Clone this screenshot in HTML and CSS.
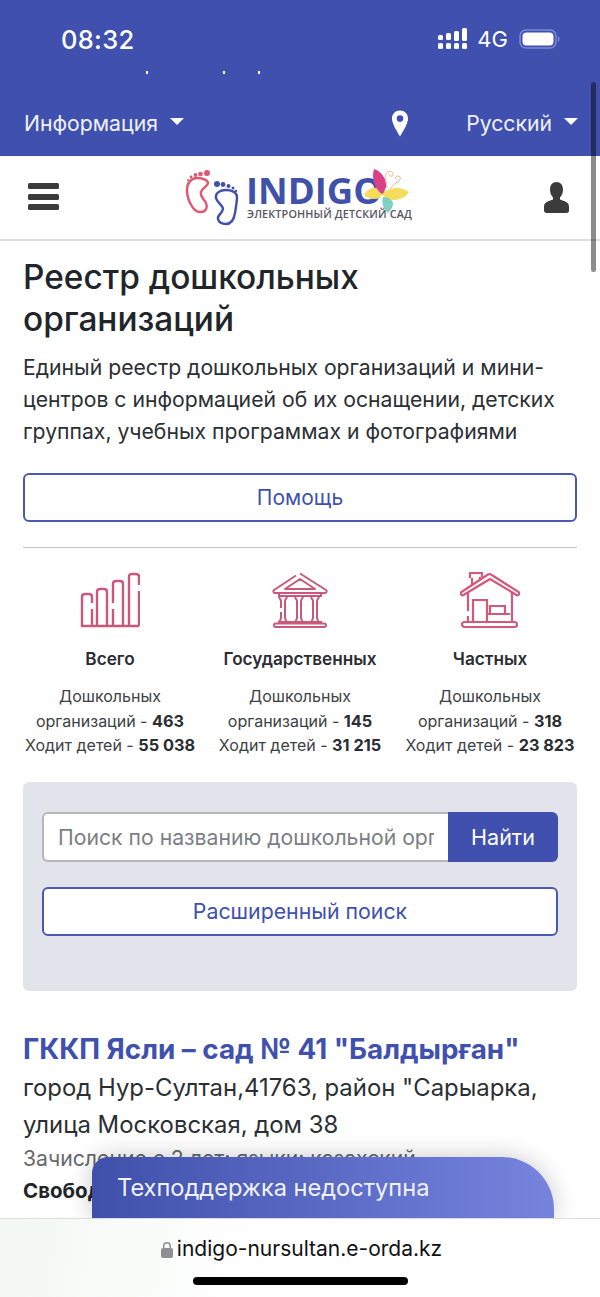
FILE: index.html
```html
<!DOCTYPE html>
<html>
<head>
	<meta charset="utf-8">
	<title>Реестр дошкольных организаций</title>
	<link rel="stylesheet" href="styles.css">
</head>
<body>
<div class="page">

	<div class="status">
		<span class="time">08:32</span>
		<div class="status-right">
			<svg class="signal" width="31" height="22" viewBox="0 0 31 22" fill="#fff">
				<rect x="0" y="7" width="5" height="5" rx="1.5"/><rect x="0" y="15" width="5" height="6" rx="1.5"/>
				<rect x="8" y="5" width="5" height="7" rx="1.5"/><rect x="8" y="15" width="5" height="6" rx="1.5"/>
				<rect x="16" y="3" width="5" height="10" rx="1.5"/><rect x="16" y="15" width="5" height="6" rx="1.5"/>
				<rect x="24" y="0" width="5" height="13" rx="1.5"/><rect x="24" y="15" width="5" height="6" rx="1.5"/>
			</svg>
			<span class="net">4G</span>
			<svg width="42" height="22" viewBox="0 0 42 22">
				<rect x="1" y="2" width="36" height="18" rx="6" fill="none" stroke="#7c89d6" stroke-width="1.5"/>
				<rect x="3.500" y="4.500" width="31" height="13" rx="4" fill="#fff"/>
				<path d="M39 8c2 .5 2 5.500 0 6z" fill="#7c89d6"/>
			</svg>
		</div>
	</div>
	<div class="specks"><i></i><i></i><i></i></div>

	<nav class="topnav">
		<span class="dropdown">Информация</span>
		<div class="topnav-right">
			<svg class="pin" width="16" height="27" viewBox="0 0 16 26">
				<path fill="#fff" fill-rule="evenodd" d="M8 0c4.500 0 8 3.500 8 8 0 5-4.500 12-8 18C4.500 20 0 13 0 8c0-4.500 3.500-8 8-8zm0 4.800a3.300 3.300 0 1 0 0 6.600 3.300 3.300 0 0 0 0-6.600z"/>
			</svg>
			<span class="dropdown">Русский</span>
		</div>
	</nav>

	<header class="header">
		<div class="burger"><i></i><i></i><i></i></div>
		<div class="logo">
			<svg class="feet" width="54" height="58" viewBox="0 0 54 58" fill="none">
				<path d="M12 9C6 9 2 14 2 21C2 30 8 44 16 43C21 43 23 38 21 34C19 30 15 28 16 23C17 19 23 17 23 14C23 11 17 9 12 9z" stroke="#e2566f" stroke-width="2.400"/>
				<g fill="#e2566f"><circle cx="22" cy="4" r="3"/><circle cx="15.500" cy="5" r="2.300"/><circle cx="10.500" cy="6" r="1.900"/><circle cx="6" cy="8" r="1.400"/><circle cx="3" cy="11" r="1.100"/></g>
				<path d="M41 21C35 21 30 24 31 29C32 34 38 36 38 40C37 45 32 46 33 50C34 54 38 55 41 55C46 55 49 50 50 44C51 38 52 32 52 28C52 23 46 21 41 21z" stroke="#3f51a8" stroke-width="2.400"/>
				<g fill="#3f51a8"><circle cx="32" cy="15" r="3"/><circle cx="38" cy="15.500" r="2.400"/><circle cx="43.500" cy="17" r="2"/><circle cx="48" cy="19" r="1.500"/><circle cx="51" cy="22" r="1.200"/></g>
			</svg>
			<div class="logo-text">
				<span class="logo-name">INDIGO</span>
				<span class="logo-sub">ЭЛЕКТРОННЫЙ ДЕТСКИЙ САД</span>
			</div>
			<svg class="flower" width="50" height="50" viewBox="0 0 50 50" fill="none">
				<path d="M3 29c3-6 10-9 18-6 1 4-1 7-2 9-6 2-12 1-16-3z" fill="#f6dc5c"/>
				<path d="M22 29C14 24 10 12 13 3c7 2 13 10 12 18z" fill="#d8408a"/>
				<path d="M21 28c6-6 18-9 27-2-4 6-10 8-15 8-5 0-9-2-12-6z" fill="#f6dc5c"/>
				<path d="M22 31c4 0 9 2 10 6 0 4-2 7-5 10-4-3-7-10-5-16z" fill="#7ed0c0"/>
				<path d="M26 22c0-5-3-9-1-14 2-4 7-3 7 0 0 3-4 3-4 0M29 23c3-4 5-6 8-7 3-2 3-6 0-6-3 0-3 3-1 4" stroke="#e8b37a" stroke-width=".9"/>
			</svg>
		</div>
		<svg class="user" width="25" height="31" viewBox="0 0 25 31" fill="#3b3b3b">
			<path d="M12.500 0c4 0 6.500 3 6.500 7.500 0 3-1 6-3 8v2c3 1.500 9 2 9 7v4c0 1.500-1 2.500-2.500 2.500h-20C1 31 0 30 0 28.500v-4c0-5 6-5.500 9-7v-2c-2-2-3-5-3-8C6 3 8.500 0 12.500 0z"/>
		</svg>
	</header>

	<main class="content">
		<h1 class="title">Реестр дошкольных организаций</h1>
		<p class="lead">Единый реестр дошкольных организаций и мини-центров с информацией об их оснащении, детских группах, учебных программах и фотографиями</p>
		<a class="btn-outline help">Помощь</a>
		<hr class="divider">

		<section class="stats">
			<div class="stat">
				<svg class="stat-icon" width="60" height="56" viewBox="0 0 60 56" fill="none" stroke="#c9597a" stroke-width="2.400">
					<path d="M2 54V25c0-2 1-3 3-3h4c2 0 3 1 3 3v6m0 6v17M17 54V20c0-2 1-3 3-3h4c2 0 3 1 3 3v34M33 54V37m0-6V12c0-2 1-3 3-3h4c2 0 3 1 3 3v42M49 54V5c0-2 1-3 3-3h4c2 0 3 1 3 3v8m0 6v35"/>
					<path d="M1 54h58"/>
				</svg>
				<div class="stat-name">Всего</div>
				<div class="stat-text">Дошкольных<br>организаций - <b>463</b><br>Ходит детей - <b>55 038</b></div>
			</div>
			<div class="stat">
				<svg class="stat-icon" width="56" height="56" viewBox="0 0 56 56" fill="none" stroke="#c9597a" stroke-width="2">
					<path d="M24 3.500L2 18c-1 1-1 3 1 3h50c2 0 2-2 1-3L28 1.500M28 7L13 17h30z" stroke-linejoin="round"/>
					<path d="M7 21v3h42v-3"/>
					<path d="M7 24c0 3 2 3 2 5v7m0 4v6l-2 5M15 24c0 3-2 3-2 5v17l2 5M23 24c0 3 2 3 2 5v17l-2 5M31 24c0 3-2 3-2 5v17l2 5M39 24c0 3 2 3 2 5v17l-2 5M47 24c0 3-2 3-2 5v17l2 5"/>
					<path d="M6 50h44"/>
					<rect x="2" y="51.500" width="52" height="3.500" rx="1.700"/>
				</svg>
				<div class="stat-name">Государственных</div>
				<div class="stat-text">Дошкольных<br>организаций - <b>145</b><br>Ходит детей - <b>31 215</b></div>
			</div>
			<div class="stat">
				<svg class="stat-icon" width="60" height="56" viewBox="0 0 60 56" fill="none" stroke="#d4587a" stroke-width="2.200">
					<path d="M1.500 20L28 2.500q1.500-1 3 0L58.500 20c2 1.500 0 4-2 3L30 7 3.500 23c-2 1-4-1.500-2-3z" stroke-linejoin="round"/>
					<path d="M10 6V1h12v4M12 6v7M20 5v3"/>
					<path d="M8 20v19m0 5v6M52 20v30"/>
					<path d="M13 50V28h14v22"/>
					<path d="M30 34h15v8H30zM28 42h22"/>
					<rect x="2" y="50" width="55" height="5" rx="2.500"/>
				</svg>
				<div class="stat-name">Частных</div>
				<div class="stat-text">Дошкольных<br>организаций - <b>318</b><br>Ходит детей - <b>23 823</b></div>
			</div>
		</section>

		<section class="search-panel">
			<div class="search-row">
				<input class="search-input" type="text" placeholder="Поиск по названию дошкольной организации">
				<button class="search-btn">Найти</button>
			</div>
			<a class="btn-outline advanced">Расширенный поиск</a>
		</section>

		<article class="result">
			<a class="result-title">ГККП Ясли – сад № 41 "Балдырған"</a>
			<div class="result-address">город Нур-Султан,41763, район "Сарыарка, улица Московская, дом 38</div>
			<div class="result-meta">Зачисление с 2 лет; языки: казахский</div>
			<div class="result-free">Свободных мест</div>
		</article>
	</main>

	<div class="scrollbar"></div>
	<div class="toast">Техподдержка недоступна</div>

	<div class="urlbar">
		<div class="url">
			<svg width="12" height="17" viewBox="0 0 12 17" fill="#8e8e93">
				<path d="M2 7V5a4 4 0 0 1 8 0v2h-1.500V5a2.500 2.500 0 0 0-5 0v2z"/>
				<rect x="0" y="7" width="12" height="10" rx="2"/>
			</svg>
			<span>indigo-nursultan.e-orda.kz</span>
		</div>
		<div class="home"></div>
	</div>
</div>
</body>
</html>
```

FILE: styles.css
```css
* { box-sizing: border-box; }

html, body { margin: 0; padding: 0; }

body {
	font-family: Inter, "Noto Sans", sans-serif;
	color: #212529;
	background: #fff;
}

.page {
	position: relative;
	width: 600px;
	height: 1297px;
	overflow: hidden;
	background: #fff;
}

/* status bar + top nav */
.status {
	height: 68px;
	padding: 10px 39px 0 61px;
	display: flex;
	justify-content: space-between;
	align-items: center;
	background: #4050ae;
	color: #fff;
}
.time { font-size: 25.500px; font-weight: 500; letter-spacing: .3px; }
.status-right { display: flex; align-items: center; gap: 8px; }
.net { font-size: 22px; margin-right: 3px; }

.specks {
	height: 10px;
	background: #4050ae;
	display: flex;
	padding-left: 146px;
}
.specks i { width: 2px; height: 3px; margin-top: 3px; background: #fff; margin-right: 75px; }
.specks i:nth-child(2) { margin-right: 33px; }

.topnav {
	height: 78px;
	padding: 12px 22px 0 24px;
	background: #4050ae;
	color: #f0f1fa;
	font-size: 21.200px;
	display: flex;
	justify-content: space-between;
	align-items: center;
}
.topnav-right { display: flex; align-items: center; gap: 58px; }
.dropdown { display: inline-flex; align-items: center; gap: 12px; }
.dropdown::after {
	content: "";
	border-left: 7px solid transparent;
	border-right: 7px solid transparent;
	border-top: 7px solid #fff;
	margin-top: -3px;
}

.header {
	height: 85px;
	padding: 0 31px 3px 28px;
	display: flex;
	justify-content: space-between;
	align-items: center;
	border-bottom: 2px solid #dedede;
	background: #fff;
}
.burger { width: 31px; display: flex; flex-direction: column; gap: 4.500px; margin-top: 1px; }
.burger i { height: 6px; border-radius: 1.500px; background: #3b3b3b; }
.user { margin-top: 3px; }

.logo { position: relative; display: flex; align-items: flex-start; width: 226px; height: 58px; margin-right: 7px; }
.feet { flex: none; margin-top: 1.500px; }
.logo-text { margin-left: 7px; display: flex; flex-direction: column; }
.logo-name {
	font-family: "Open Sans", sans-serif;
	font-size: 36.500px;
	font-weight: 700;
	line-height: 36px;
	margin-top: 5px;
	color: #3f51a8;
}
.logo-sub {
	font-family: "Open Sans", sans-serif;
	font-size: 10.800px;
	font-weight: 600;
	letter-spacing: .15px;
	line-height: 12px;
	margin-left: 1px;
	color: #55555f;
	white-space: nowrap;
}
.flower { position: absolute; left: 176px; top: -1px; }

/* main column */
.content { padding: 0 23px 0 23px; }

.title {
	margin: 15px 0 0;
	font-size: 33.400px;
	line-height: 42px;
	font-weight: 500;
	color: #212529;
}
.lead {
	margin: 11px 0 0;
	font-size: 21.200px;
	line-height: 32px;
	color: #2b2f33;
}

.btn-outline {
	display: block;
	height: 49px;
	line-height: 45px;
	text-align: center;
	font-size: 21px;
	color: #4050ae;
	background: #fff;
	border: 2px solid #4a59b3;
	border-radius: 6px;
}
.help { margin-top: 26px; }

.divider { margin: 25px 0 0; border: 0; border-top: 1px solid #c6c6c6; }

.stats { display: grid; grid-template-columns: 174px 206px 174px; margin-top: 24px; }
.stat { text-align: center; }
.stat-icon { display: block; margin: 0 auto; }
.stat-name { margin-top: 21px; font-size: 17.200px; line-height: 20px; font-weight: 600; color: #2b2d33; }
.stat-text { margin-top: 15px; font-size: 16px; line-height: 24.500px; color: #3c3f44; white-space: nowrap; }
.stat-text b { font-size: 16.300px; font-weight: 700; color: #2b2d33; }

.search-panel {
	height: 209px;
	margin-top: 24px;
	padding: 30px 19px 0;
	background: #e2e3eb;
	border-radius: 6px;
}
.search-row { display: flex; height: 50px; }
.search-input {
	flex: 1;
	min-width: 0;
	padding: 0 14px;
	font: 21.200px Inter, sans-serif;
	border: 2px solid #b5b5b9;
	border-right: 0;
	border-radius: 6px 0 0 6px;
	background: #fff;
}
.search-input::placeholder { color: #7b7e84; opacity: 1; }
.search-btn {
	width: 110px;
	font: 21.500px Inter, sans-serif;
	color: #fff;
	background: #4050ae;
	border: 0;
	border-radius: 0 6px 6px 0;
}
.advanced { margin-top: 25px; font-size: 21.300px; }

.result { margin-top: 40px; }
.result-title { display: block; font-size: 27.800px; line-height: 36px; font-weight: 700; color: #4050ae; white-space: nowrap; }
.result-address { margin-top: 2px; font-size: 23.900px; line-height: 37px; color: #2b2f33; }
.result-meta { font-size: 21.200px; line-height: 28px; color: #66696e; margin-top: 1px; white-space: nowrap; }
.result-free { font-size: 20.500px; line-height: 30px; margin-top: 4px; font-weight: 700; color: #212529; white-space: nowrap; }

/* things lying over the page */
.scrollbar {
	position: absolute;
	left: 591px;
	top: 82px;
	width: 5px;
	height: 190px;
	border-radius: 3px;
	background: rgba(0, 0, 0, .45);
}

.toast {
	position: absolute;
	left: 92px;
	top: 1157px;
	width: 462px;
	height: 62px;
	padding: 14px 0 0 25px;
	font-size: 23.600px;
	line-height: 34px;
	color: #f1f2fb;
	background: linear-gradient(90deg, #3f50ab, #7684de);
	border-radius: 16px 52px 0 0;
	box-shadow: 0 0 24px rgba(0, 0, 0, .22);
}

.urlbar {
	position: absolute;
	left: 0;
	top: 1218px;
	width: 600px;
	height: 79px;
	background: linear-gradient(100deg, #f3f8f4, #fff 45%);
	border-top: 1px solid #dcdcdc;
}
.url {
	display: flex;
	justify-content: center;
	align-items: center;
	gap: 4px;
	height: 58px;
	padding-left: 3px;
	font-size: 21px;
	color: #111;
}
.url svg { margin-top: 3px; }
.home {
	width: 215px;
	height: 8px;
	margin: 0 auto;
	border-radius: 4px;
	background: #000;
}
```
